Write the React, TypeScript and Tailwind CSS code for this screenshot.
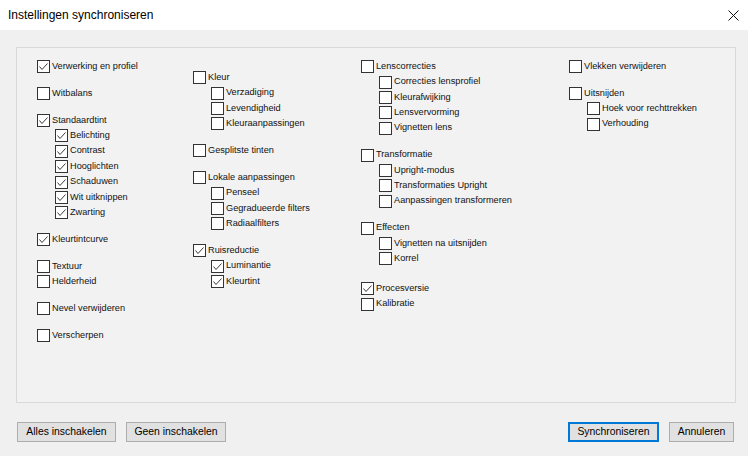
type Item = { label: string; checked?: boolean; children?: Item[] };

const columns: { offset: string; width: string; groups: Item[] }[] = [
  {
    offset: "pt-[11px]",
    width: "w-[156px]",
    groups: [
      { label: "Verwerking en profiel", checked: true },
      { label: "Witbalans" },
      {
        label: "Standaardtint",
        checked: true,
        children: [
          { label: "Belichting", checked: true },
          { label: "Contrast", checked: true },
          { label: "Hooglichten", checked: true },
          { label: "Schaduwen", checked: true },
          { label: "Wit uitknippen", checked: true },
          { label: "Zwarting", checked: true },
        ],
      },
      { label: "Kleurtintcurve", checked: true },
      { label: "Textuur", children: [] },
      { label: "Nevel verwijderen" },
      { label: "Verscherpen" },
    ],
  },
  {
    offset: "pt-[22px]",
    width: "w-[168px]",
    groups: [
      {
        label: "Kleur",
        children: [
          { label: "Verzadiging" },
          { label: "Levendigheid" },
          { label: "Kleuraanpassingen" },
        ],
      },
      { label: "Gesplitste tinten" },
      {
        label: "Lokale aanpassingen",
        children: [
          { label: "Penseel" },
          { label: "Gegradueerde filters" },
          { label: "Radiaalfilters" },
        ],
      },
      {
        label: "Ruisreductie",
        checked: true,
        children: [
          { label: "Luminantie", checked: true },
          { label: "Kleurtint", checked: true },
        ],
      },
    ],
  },
  {
    offset: "pt-[11px]",
    width: "w-[208px]",
    groups: [
      {
        label: "Lenscorrecties",
        children: [
          { label: "Correcties lensprofiel" },
          { label: "Kleurafwijking" },
          { label: "Lensvervorming" },
          { label: "Vignetten lens" },
        ],
      },
      {
        label: "Transformatie",
        children: [
          { label: "Upright-modus" },
          { label: "Transformaties Upright" },
          { label: "Aanpassingen transformeren" },
        ],
      },
      {
        label: "Effecten",
        children: [{ label: "Vignetten na uitsnijden" }, { label: "Korrel" }],
      },
    ],
  },
  {
    offset: "pt-[11px]",
    width: "w-[150px]",
    groups: [
      { label: "Vlekken verwijderen" },
      {
        label: "Uitsnijden",
        children: [{ label: "Hoek voor rechttrekken" }, { label: "Verhouding" }],
      },
    ],
  },
];

function CheckBox({ checked }: { checked?: boolean }) {
  return (
    <span className="w-[13px] h-[13px] shrink-0 border border-[#333333] bg-white flex items-center justify-center">
      {checked && (
        <svg width="11" height="11" viewBox="0 0 11 11">
          <polyline
            points="1.5,5.5 4,8.5 9.5,2.5"
            fill="none"
            stroke="#3a3a3a"
            strokeWidth="1"
          />
        </svg>
      )}
    </span>
  );
}

function Row({ item, indent }: { item: Item; indent?: boolean }) {
  return (
    <div
      className={`h-[15.4px] flex items-center gap-[2px] ${indent ? "pl-[18px]" : ""}`}
    >
      <CheckBox checked={item.checked} />
      <span className="text-[9.2px] text-[#111] whitespace-nowrap">{item.label}</span>
    </div>
  );
}

function Group({ item }: { item: Item }) {
  // "Textuur" and "Helderheid" sit together without a gap
  if (item.label === "Textuur") {
    return (
      <div>
        <Row item={item} />
        <Row item={{ label: "Helderheid" }} />
      </div>
    );
  }
  return (
    <div>
      <Row item={item} />
      {item.children?.map((c) => (
        <Row key={c.label} item={c} indent />
      ))}
    </div>
  );
}

function Button({
  children,
  width,
  primary,
}: {
  children: string;
  width: string;
  primary?: boolean;
}) {
  return (
    <button
      className={`${width} h-[20px] bg-[#e1e1e1] text-[10.4px] text-black flex items-center justify-center ${
        primary ? "border-2 border-[#0078d7]" : "border border-[#adadad]"
      }`}
    >
      {children}
    </button>
  );
}

export default function App() {
  return (
    <div
      className="w-[748px] h-[456px] bg-[#f0f0f0] flex flex-col overflow-hidden"
      style={{ fontFamily: '"Liberation Sans", Arial, sans-serif' }}
    >
      {/* Title bar */}
      <div className="h-[30px] bg-white flex items-center justify-between pl-[8px] pr-[9px]">
        <span className="text-[12px] text-black">Instellingen synchroniseren</span>
        <svg width="11" height="11" viewBox="0 0 11 11">
          <path d="M0.5 0.5 L10.5 10.5 M10.5 0.5 L0.5 10.5" stroke="#111" strokeWidth="1" />
        </svg>
      </div>

      {/* Options panel */}
      <div className="ml-[16px] mt-[17px] w-[720px] h-[356px] border border-[#d9d9d9] bg-[#f2f2f2] flex pl-[20px]">
        {columns.map((col, i) => (
          <div key={i} className={`${col.width} ${col.offset} flex flex-col gap-[11.5px]`}>
            {col.groups.map((g) => (
              <Group key={g.label} item={g} />
            ))}
            {i === 2 && (
              <div className="mt-[3px]">
                <Row item={{ label: "Procesversie", checked: true }} />
                <Row item={{ label: "Kalibratie" }} />
              </div>
            )}
          </div>
        ))}
      </div>

      {/* Footer buttons */}
      <div className="mt-[19px] flex items-center justify-between pl-[17px] pr-[14px]">
        <div className="flex gap-[10px]">
          <Button width="w-[99px]">Alles inschakelen</Button>
          <Button width="w-[100px]">Geen inschakelen</Button>
        </div>
        <div className="flex gap-[10px]">
          <Button width="w-[91px]" primary>
            Synchroniseren
          </Button>
          <Button width="w-[65px]">Annuleren</Button>
        </div>
      </div>
    </div>
  );
}
